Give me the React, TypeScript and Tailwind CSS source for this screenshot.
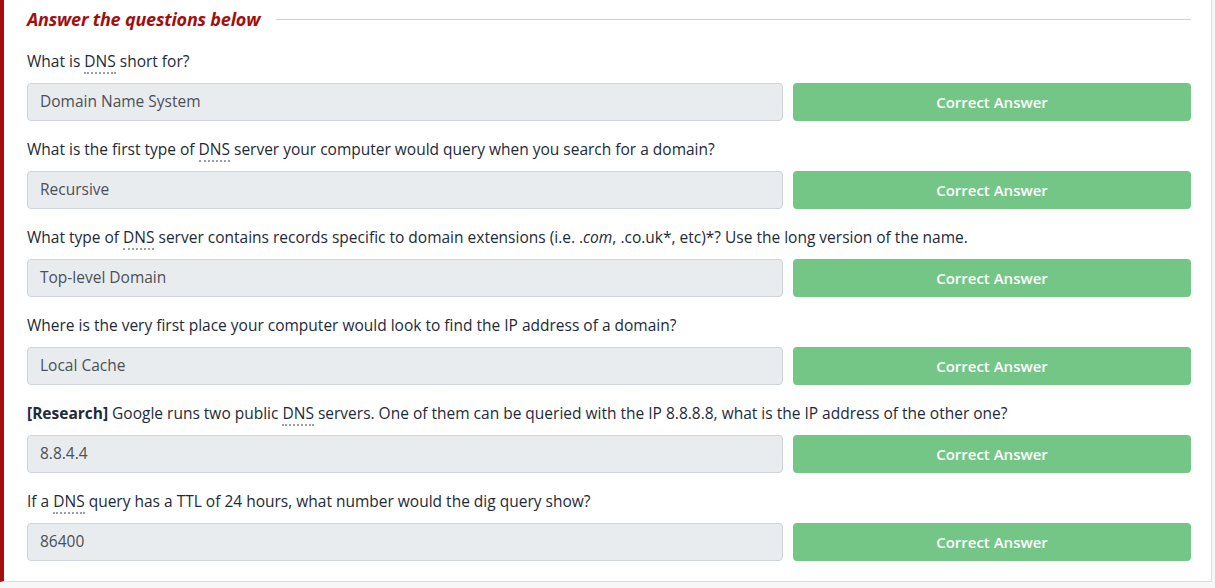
import React from 'react';

const font = { fontFamily: '"Open Sans", "Noto Sans", sans-serif' };

function Dns() {
  return (
    <abbr className="no-underline border-b-2 border-dotted border-[#9aa0a6] cursor-help" title="Domain Name System">
      DNS
    </abbr>
  );
}

const questions: { q: React.ReactNode; a: string }[] = [
  { q: <>What is <Dns /> short for?</>, a: 'Domain Name System' },
  {
    q: <>What is the first type of <Dns /> server your computer would query when you search for a domain?</>,
    a: 'Recursive',
  },
  {
    q: (
      <>
        What type of <Dns /> server contains records specific to domain extensions (i.e. .<em>com</em>, .co.uk*, etc)*? Use the long version of the name.
      </>
    ),
    a: 'Top-level Domain',
  },
  { q: <>Where is the very first place your computer would look to find the IP address of a domain?</>, a: 'Local Cache' },
  {
    q: (
      <>
        <strong className="font-bold">[Research]</strong> Google runs two public <Dns /> servers. One of them can be queried with the IP 8.8.8.8, what is the IP address of the other one?
      </>
    ),
    a: '8.8.4.4',
  },
  { q: <>If a <Dns /> query has a TTL of 24 hours, what number would the dig query show?</>, a: '86400' },
];

export default function App() {
  return (
    <div className="w-[1215px] h-[588px] bg-[#f7f7f7] overflow-hidden" style={font}>
      <div className="w-[1212px] h-[582px] bg-white border-l-4 border-l-[#a30f0f] border-r border-b border-[#dedede] pl-[23px] pr-[20px]">
        <div className="flex items-center gap-4 h-[38px]">
          <h2 className="text-[18px] font-bold italic text-[#a30f0f] whitespace-nowrap tracking-[-0.2px]">
            Answer the questions below
          </h2>
          <div className="flex-1 h-px bg-[#d0d0d0]" />
        </div>
        <div className="flex flex-col">
          {questions.map((item, i) => (
            <div key={i} className="flex flex-col pt-[12px] pb-[5px]">
              <p className="text-[15.5px] leading-[22px] text-[#1d2a3a] mb-[11px]">{item.q}</p>
              <div className="flex gap-[10px] h-[38px]">
                <div className="w-[756px] bg-[#e9ecef] border border-[#ced4da] rounded-[4px] flex items-center px-3 text-[15.5px] text-[#495057]">
                  {item.a}
                </div>
                <button className="flex-1 bg-[#74c686] rounded-[4px] text-white text-[15px] font-semibold">
                  Correct Answer
                </button>
              </div>
            </div>
          ))}
        </div>
      </div>
    </div>
  );
}
